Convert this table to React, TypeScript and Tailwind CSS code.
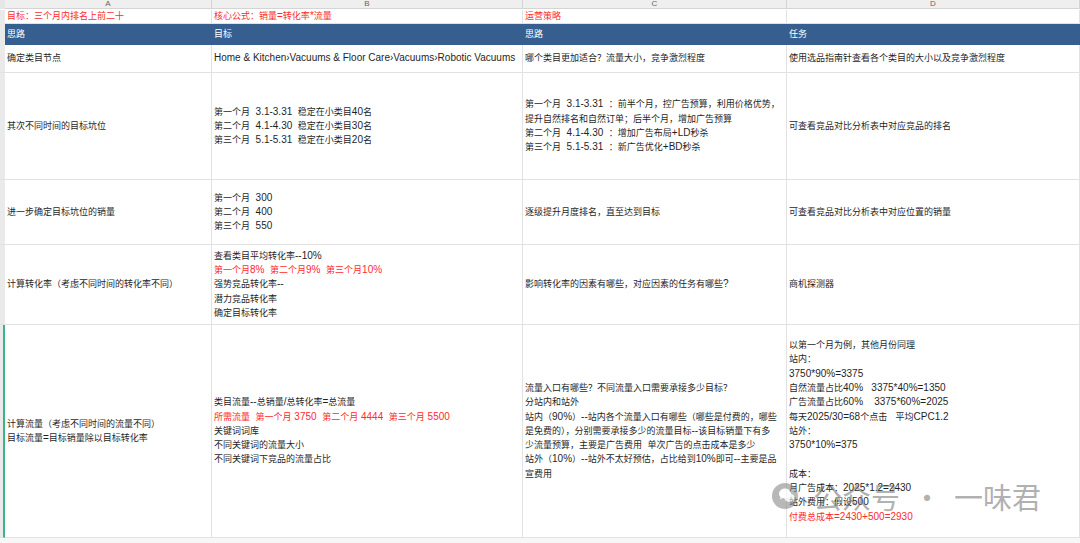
import clsx from "clsx"

type Line = string | { t: string; red?: boolean }

const CJK = /([\u2e80-\u9fff\u3000-\u303f\uff00-\uffef]+)/

// CJK glyphs render a touch smaller than latin, like the sheet's font
function T({ s }: { s: string }) {
  return (
    <>
      {s.split(CJK).map((p, i) =>
        p === "" ? null : i % 2 === 1 ? (
          <span key={i} className="text-[9px]">
            {p}
          </span>
        ) : (
          <span key={i}>{p}</span>
        ),
      )}
    </>
  )
}

function Cell({ lines, className }: { lines: Line[]; className?: string }) {
  return (
    <div className={clsx("flex items-center overflow-hidden border-r border-b border-[#e2e2e2] pl-[2px]", className)}>
      <div>
        {lines.map((l, i) => {
          const line = typeof l === "string" ? { t: l } : l
          return (
            <div key={i} className={clsx("leading-[14.3px] whitespace-pre", line.red && "text-[#ff2b2b]")}>
              <T s={line.t === "" ? "\u00a0" : line.t} />
            </div>
          )
        })}
      </div>
    </div>
  )
}

const ROWS: { h: string; active?: boolean; cells: Line[][] }[] = [
  {
    h: "h-[28px]",
    cells: [
      ["确定类目节点"],
      ["Home & Kitchen›Vacuums & Floor Care›Vacuums›Robotic Vacuums"],
      ["哪个类目更加适合？流量大小，竞争激烈程度"],
      ["使用选品指南针查看各个类目的大小以及竞争激烈程度"],
    ],
  },
  {
    h: "h-[107px]",
    cells: [
      ["其次不同时间的目标坑位"],
      ["第一个月  3.1-3.31  稳定在小类目40名", "第二个月  4.1-4.30  稳定在小类目30名", "第三个月  5.1-5.31  稳定在小类目20名"],
      [
        "第一个月  3.1-3.31  ：前半个月，控广告预算，利用价格优势，",
        "提升自然排名和自然订单；后半个月，增加广告预算",
        "第二个月  4.1-4.30  ：增加广告布局+LD秒杀",
        "第三个月  5.1-5.31  ：新广告优化+BD秒杀",
      ],
      ["可查看竞品对比分析表中对应竞品的排名"],
    ],
  },
  {
    h: "h-[65px]",
    cells: [
      ["进一步确定目标坑位的销量"],
      ["第一个月  300", "第二个月  400", "第三个月  550"],
      ["逐级提升月度排名，直至达到目标"],
      ["可查看竞品对比分析表中对应位置的销量"],
    ],
  },
  {
    h: "h-[80px]",
    cells: [
      ["计算转化率（考虑不同时间的转化率不同）"],
      [
        "查看类目平均转化率--10%",
        { t: "第一个月8%  第二个月9%  第三个月10%", red: true },
        "强势竞品转化率--",
        "潜力竞品转化率",
        "确定目标转化率",
      ],
      ["影响转化率的因素有哪些，对应因素的任务有哪些?"],
      ["商机探测器"],
    ],
  },
  {
    h: "h-[213px]",
    active: true,
    cells: [
      ["计算流量（考虑不同时间的流量不同）", "目标流量=目标销量除以目标转化率"],
      [
        "类目流量--总销量/总转化率=总流量",
        { t: "所需流量  第一个月 3750  第二个月 4444  第三个月 5500", red: true },
        "关键词词库",
        "不同关键词的流量大小",
        "不同关键词下竞品的流量占比",
      ],
      [
        "流量入口有哪些？不同流量入口需要承接多少目标？",
        "分站内和站外",
        "站内（90%）--站内各个流量入口有哪些（哪些是付费的，哪些",
        "是免费的），分别需要承接多少的流量目标--该目标销量下有多",
        "少流量预算，主要是广告费用  单次广告的点击成本是多少",
        "站外（10%）--站外不太好预估，占比给到10%即可--主要是品",
        "宣费用",
      ],
      [
        "以第一个月为例，其他月份同理",
        "站内：",
        "3750*90%=3375",
        "自然流量占比40%   3375*40%=1350",
        "广告流量占比60%    3375*60%=2025",
        "每天2025/30=68个点击   平均CPC1.2",
        "站外：",
        "3750*10%=375",
        "",
        "成本：",
        "月广告成本：2025*1.2=2430",
        "站外费用：假设500",
        { t: "付费总成本=2430+500=2930", red: true },
      ],
    ],
  },
]

const GRID = "grid grid-cols-[5px_207px_311px_264px_1fr]"

export default function App() {
  return (
    <div className="relative h-[543px] w-[1080px] overflow-hidden bg-white font-['Liberation_Sans','Noto_Sans_CJK_SC',sans-serif] text-[10px] text-[#1f1f1f]">
      {/* column letters */}
      <div className={clsx(GRID, "h-[9px]")}>
        <div className="bg-[#e6e6e6]" />
        {["A", "B", "C", "D"].map((c) => (
          <div
            key={c}
            className="border-r border-b border-[#d4d4d4] bg-[#efefef] text-center text-[8px] leading-[7px] text-[#666]"
          >
            {c}
          </div>
        ))}
      </div>

      {/* red notes */}
      <div className={clsx(GRID, "h-[15px] pt-px text-[#ff2b2b]")}>
        <div className="bg-[#eaeaea]" />
        <Cell lines={["目标：三个月内排名上前二十"]} />
        <Cell lines={["核心公式：销量=转化率*流量"]} />
        <Cell lines={["运营策略"]} />
        <Cell lines={[]} />
      </div>

      {/* header */}
      <div className={clsx(GRID, "h-[21px] text-white")}>
        <div className="bg-[#eaeaea]" />
        {["思路", "目标", "思路", "任务"].map((h, i) => (
          <div key={i} className="flex items-center bg-[#365f8f] pl-[2px]">
            <T s={h} />
          </div>
        ))}
      </div>

      {ROWS.map((r, i) => (
        <div key={i} className={clsx(GRID, r.h)}>
          <div
            className={clsx(
              "border-b border-[#e2e2e2] bg-[#eaeaea]",
              r.active && "border-r-2 border-r-[#3bb583]",
            )}
          />
          {r.cells.map((c, j) => (
            <Cell key={j} lines={c} />
          ))}
        </div>
      ))}

      <div className="h-[5px] bg-[#f7f7f7]" />

      {/* watermark */}
      <div className="absolute top-[481px] left-[770px] flex items-center font-['Noto_Sans_CJK_SC',sans-serif] text-[29px] leading-[29px] text-[#6e6e6e]/55">
        <svg width="32" height="30" viewBox="0 0 32 30" className="mr-[11px] opacity-60">
          <circle cx="15" cy="15" r="13" fill="#8a8a8a" />
          <path d="M9 12.5a6 5 0 1 1 3.5 4.6l-2.6 1.4.6-2.4A5 5 0 0 1 9 12.5z" fill="#fff" />
          <path d="M14.5 16.5a5 4.2 0 1 0 7.5-3.4a5 4.2 0 0 0-7.5 3.4z" fill="#fff" opacity="0.85" />
        </svg>
        <span>公众号</span>
        <span className="w-[54px] text-center">·</span>
        <span>一味君</span>
      </div>
    </div>
  )
}
